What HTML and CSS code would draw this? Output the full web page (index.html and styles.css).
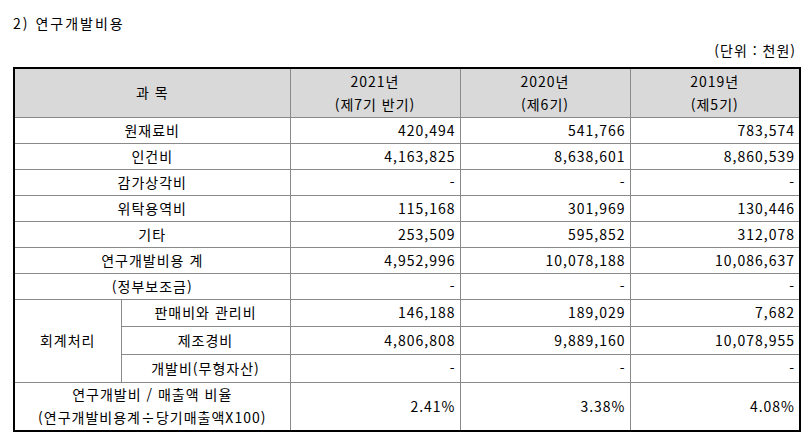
FILE: index.html
```html
<!DOCTYPE html>
<html lang="ko">
<head>
<meta charset="utf-8">
<title>연구개발비용</title>
<link rel="stylesheet" href="styles.css">
</head>
<body>
<div class="page">
  <div class="title">2) 연구개발비용</div>
  <div class="unit">(단위 : 천원)</div>
  <table class="rd">
    <colgroup>
      <col class="c-a"><col class="c-b"><col class="c-n"><col class="c-n"><col class="c-n">
    </colgroup>
    <thead>
      <tr class="h-row">
        <th colspan="2">과 목</th>
        <th>2021년<br>(제7기 반기)</th>
        <th>2020년<br>(제6기)</th>
        <th>2019년<br>(제5기)</th>
      </tr>
    </thead>
    <tbody>
      <tr class="r26"><td colspan="2" class="lbl">원재료비</td><td class="num">420,494</td><td class="num">541,766</td><td class="num">783,574</td></tr>
      <tr class="r26"><td colspan="2" class="lbl">인건비</td><td class="num">4,163,825</td><td class="num">8,638,601</td><td class="num">8,860,539</td></tr>
      <tr class="r26"><td colspan="2" class="lbl">감가상각비</td><td class="num">-</td><td class="num">-</td><td class="num">-</td></tr>
      <tr class="r26"><td colspan="2" class="lbl">위탁용역비</td><td class="num">115,168</td><td class="num">301,969</td><td class="num">130,446</td></tr>
      <tr class="r26"><td colspan="2" class="lbl">기타</td><td class="num">253,509</td><td class="num">595,852</td><td class="num">312,078</td></tr>
      <tr class="r26"><td colspan="2" class="lbl">연구개발비용 계</td><td class="num">4,952,996</td><td class="num">10,078,188</td><td class="num">10,086,637</td></tr>
      <tr class="r26"><td colspan="2" class="lbl">(정부보조금)</td><td class="num">-</td><td class="num">-</td><td class="num">-</td></tr>
      <tr class="r27"><td rowspan="3" class="lbl">회계처리</td><td class="lbl">판매비와 관리비</td><td class="num">146,188</td><td class="num">189,029</td><td class="num">7,682</td></tr>
      <tr class="r28"><td class="lbl">제조경비</td><td class="num">4,806,808</td><td class="num">9,889,160</td><td class="num">10,078,955</td></tr>
      <tr class="r28"><td class="lbl">개발비(무형자산)</td><td class="num">-</td><td class="num">-</td><td class="num">-</td></tr>
      <tr class="r49"><td colspan="2" class="lbl">연구개발비 / 매출액 비율<br>(연구개발비용계÷당기매출액X100)</td><td class="num">2.41%</td><td class="num">3.38%</td><td class="num">4.08%</td></tr>
    </tbody>
  </table>
</div>
</body>
</html>
```

FILE: styles.css
```css
html, body {
  margin: 0;
  padding: 0;
  background: #ffffff;
}
body {
  font-family: "Noto Sans CJK KR", "Noto Sans", sans-serif;
  font-size: 14px;
  color: #000000;
}
.page {
  padding: 13px 7px 0 13px;
}
.title {
  line-height: 20px;
  height: 20px;
  letter-spacing: 2px;
}
.unit {
  margin-top: 7px;
  line-height: 20px;
  height: 20px;
  text-align: right;
  padding-right: 4px;
  letter-spacing: 1px;
}
.rd {
  margin-top: 7px;
  width: 787px;
  table-layout: fixed;
  border-collapse: collapse;
  border: 2px solid #000000;
}
.c-a { width: 107px; }
.c-b { width: 169px; }
.c-n { width: 170px; }
.rd th, .rd td {
  border: 1px solid #8a8a8a;
  padding: 0 4px;
  line-height: 23px;
  vertical-align: middle;
  font-weight: normal;
  letter-spacing: 1px;
}
.rd th {
  background: #d9d9d9;
  text-align: center;
}
.h-row { height: 49px; }
.r26 { height: 26px; }
.r27 { height: 27px; }
.r28 { height: 28px; }
.r49 { height: 49px; }
.lbl { text-align: center; }
.num { text-align: right; }
```
